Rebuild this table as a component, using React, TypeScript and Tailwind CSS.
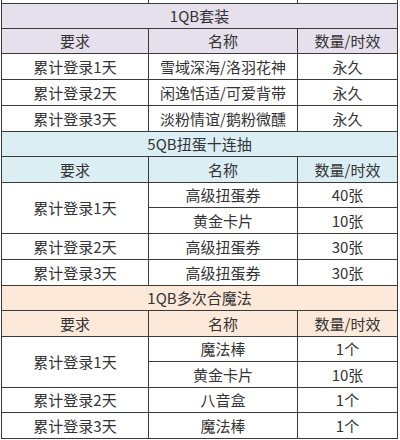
import React from "react";

type Cell = { t: string; rs?: number };
type Row = { h: number; cells: Cell[] };

const sections: { title: string; bg: string; th: number; hh: number; rows: Row[] }[] = [
  {
    title: "1QB套装",
    bg: "bg-[#e5e0ec]",
    th: 25,
    hh: 25,
    rows: [
      { h: 26, cells: [{ t: "累计登录1天" }, { t: "雪域深海/洛羽花神" }, { t: "永久" }] },
      { h: 26, cells: [{ t: "累计登录2天" }, { t: "闲逸恬适/可爱背带" }, { t: "永久" }] },
      { h: 26, cells: [{ t: "累计登录3天" }, { t: "淡粉情谊/鹅粉微醺" }, { t: "永久" }] },
    ],
  },
  {
    title: "5QB扭蛋十连抽",
    bg: "bg-[#daeef3]",
    th: 25,
    hh: 26,
    rows: [
      { h: 25, cells: [{ t: "累计登录1天", rs: 2 }, { t: "高级扭蛋券" }, { t: "40张" }] },
      { h: 26, cells: [{ t: "黄金卡片" }, { t: "10张" }] },
      { h: 26, cells: [{ t: "累计登录2天" }, { t: "高级扭蛋券" }, { t: "30张" }] },
      { h: 26, cells: [{ t: "累计登录3天" }, { t: "高级扭蛋券" }, { t: "30张" }] },
    ],
  },
  {
    title: "1QB多次合魔法",
    bg: "bg-[#fde9d9]",
    th: 25,
    hh: 26,
    rows: [
      { h: 25, cells: [{ t: "累计登录1天", rs: 2 }, { t: "魔法棒" }, { t: "1个" }] },
      { h: 26, cells: [{ t: "黄金卡片" }, { t: "10张" }] },
      { h: 25, cells: [{ t: "累计登录2天" }, { t: "八音盒" }, { t: "1个" }] },
      { h: 26, cells: [{ t: "累计登录3天" }, { t: "魔法棒" }, { t: "1个" }] },
    ],
  },
];

const td = "border border-[#3a3a3a] text-center align-middle p-0 leading-none";

export default function App() {
  return (
    <div
      className="w-[400px] h-[440px] bg-white overflow-hidden text-[15px] text-[#333333]"
      style={{ fontFamily: '"Microsoft YaHei", "Noto Sans CJK SC", "Noto Sans", sans-serif' }}
    >
      <table className="ml-[1px] w-[396px] border-collapse table-fixed">
        <colgroup>
          <col className="w-[147px]" />
          <col className="w-[149px]" />
          <col className="w-[100px]" />
        </colgroup>
        <tbody>
          <tr className="h-[3px]">
            <td className="border-x border-[#3a3a3a] p-0" />
            <td className="border-x border-[#3a3a3a] p-0" />
            <td className="border-x border-[#3a3a3a] p-0" />
          </tr>
          {sections.map((s) => (
            <React.Fragment key={s.title}>
              <tr style={{ height: s.th }}>
                <td colSpan={3} className={`${td} ${s.bg}`}>
                  {s.title}
                </td>
              </tr>
              <tr style={{ height: s.hh }} className={s.bg}>
                <td className={td}>要求</td>
                <td className={td}>名称</td>
                <td className={td}>数量/时效</td>
              </tr>
              {s.rows.map((r, i) => (
                <tr key={i} style={{ height: r.h }}>
                  {r.cells.map((c, j) => (
                    <td key={j} rowSpan={c.rs} className={td}>
                      {c.t}
                    </td>
                  ))}
                </tr>
              ))}
            </React.Fragment>
          ))}
        </tbody>
      </table>
    </div>
  );
}
